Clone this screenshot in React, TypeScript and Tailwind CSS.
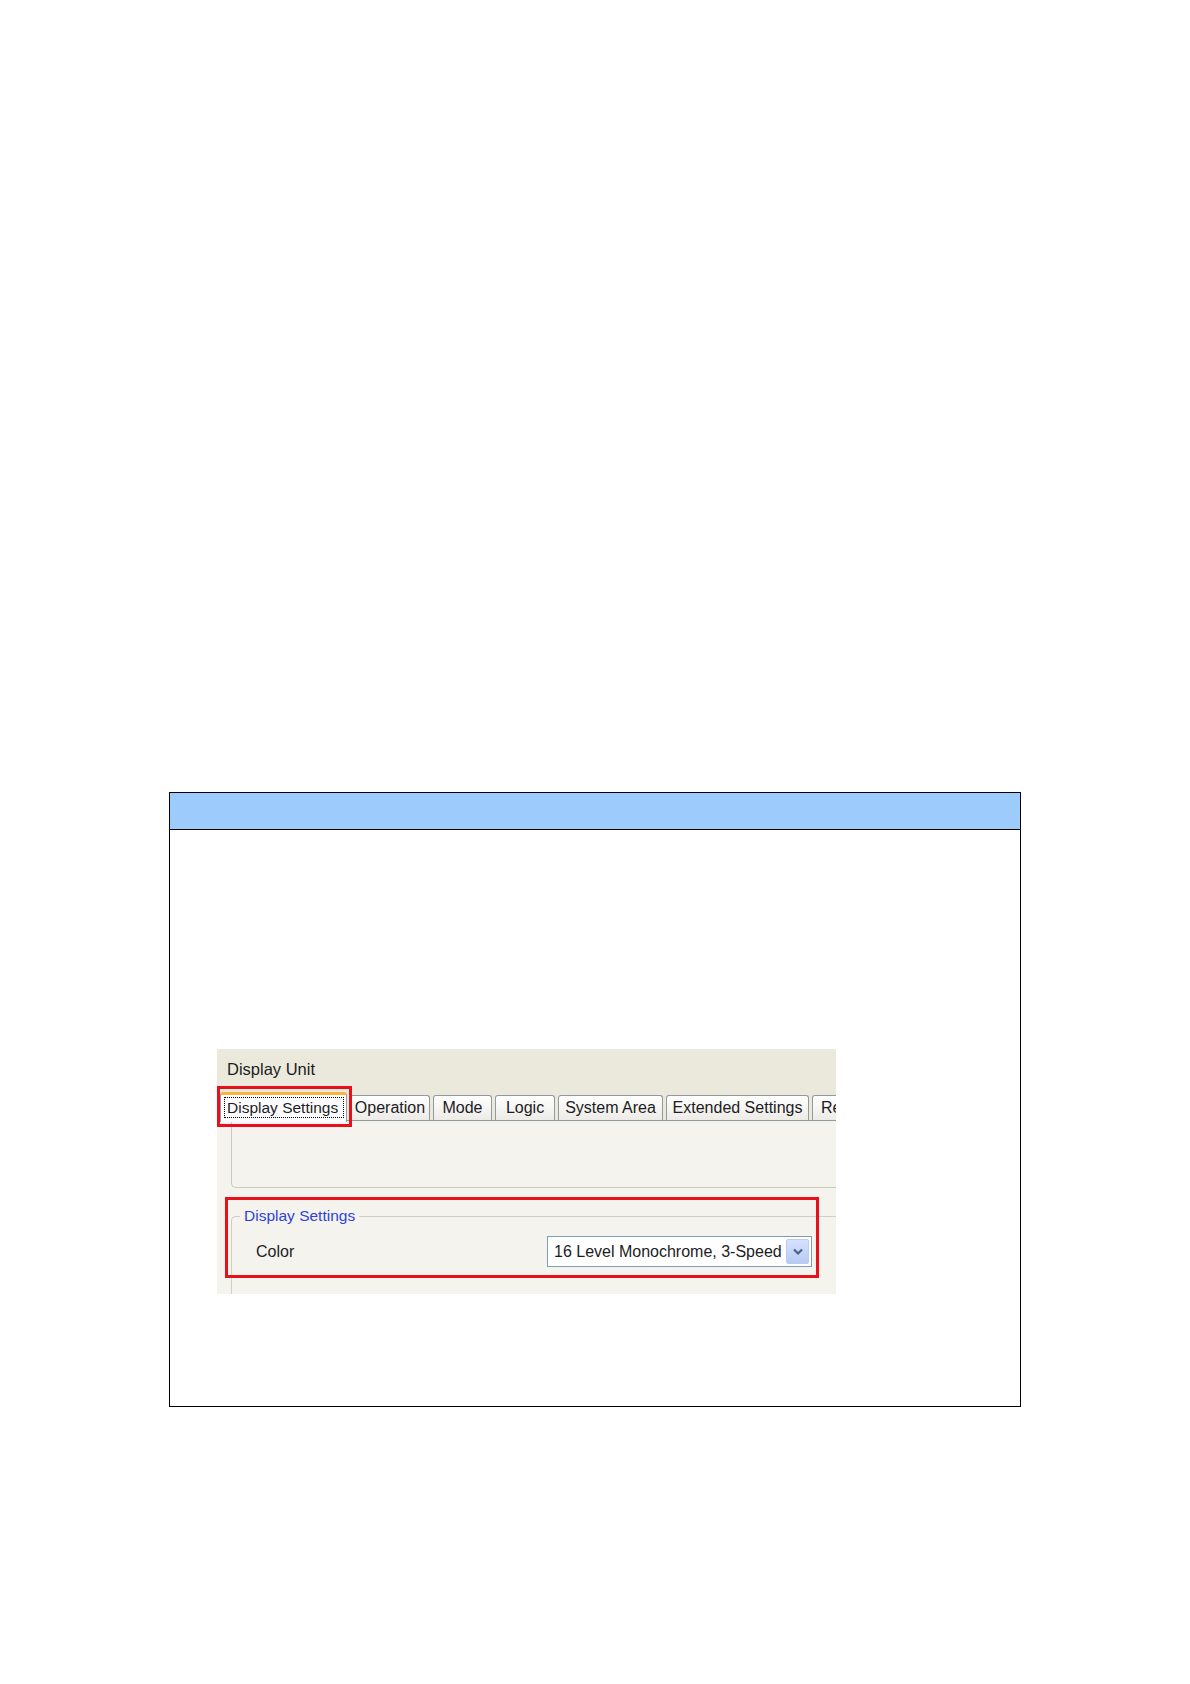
import React from "react";

function Tab({ label, w, left }: { label: string; w: string; left?: boolean }) {
  return (
    <div
      className={`${w} h-[25px] shrink-0 border border-b-0 border-[#919b9c] rounded-t-[3px] bg-gradient-to-b from-white to-[#ecebe6] ${left ? "text-left pl-[8px]" : "text-center"} pt-[3px] leading-[18px] whitespace-nowrap overflow-hidden`}
    >
      {label}
    </div>
  );
}

export default function App() {
  return (
    <div className="w-[1190px] h-[1684px] bg-white pt-[792px] pl-[169px]">
      <div className="w-[852px] h-[615px] border border-black flex flex-col">
        <div className="h-[37px] shrink-0 bg-[#9dcbfb] border-b border-black" />
        <div className="pl-[47px] pt-[219px]">
          <div className="relative w-[619px] h-[245px] overflow-hidden bg-[#ebe9dc] flex flex-col font-['Liberation_Sans',Arial,sans-serif] text-[16px] text-[#1c1c24]">
            <div className="h-[43px] shrink-0 pl-[10px] pt-[11px] leading-[18px] text-[16.5px]">Display Unit</div>
            <div className="h-[28px] shrink-0 flex items-end gap-[3px] pl-[3px] relative z-10">
              <div className="w-[127px] h-[30px] mb-[-2px] shrink-0 bg-[#fcfcfe] border-t-[3px] border-t-[#f6b641] border-x border-x-[#919b9c] rounded-t-[3px] pt-[2px] pl-[3px]">
                <div className="w-[120px] h-[21px] border border-dotted border-black leading-[18px] whitespace-nowrap pt-[1px] pl-[2px] text-[15.5px]">
                  Display Settings
                </div>
              </div>
              <Tab label="Operation" w="w-[80px]" />
              <Tab label="Mode" w="w-[59px]" />
              <Tab label="Logic" w="w-[60px]" />
              <Tab label="System Area" w="w-[105px]" />
              <Tab label="Extended Settings" w="w-[143px]" />
              <Tab label="Re" w="w-[70px]" left />
            </div>
            <div className="flex-1 bg-[#f4f3ee] border-t border-[#919b9c] pl-[14px] flex flex-col">
              <div className="h-[67px] shrink-0 border-l border-b border-[#cac9bd] rounded-bl-[5px]" />
              <fieldset className="mt-[19px] flex-1 border-t border-l border-[#d0cfc3] rounded-tl-[5px]">
                <legend className="ml-[8px] px-[4px] leading-[18px] text-[#2f43d6] whitespace-nowrap text-[15.5px]">
                  Display Settings
                </legend>
                <div className="flex items-center pt-[11px] pl-[24px]">
                  <div className="w-[291px] shrink-0 leading-[18px]">Color</div>
                  <div className="w-[265px] h-[31px] shrink-0 border border-[#7f9db9] bg-white flex items-center pl-[6px] pr-[2px]">
                    <span className="flex-1 leading-[18px] whitespace-nowrap">16 Level Monochrome, 3-Speed</span>
                    <div className="w-[23px] h-[25px] rounded-[2px] bg-gradient-to-b from-[#d6e2fc] to-[#b7cbf6] border border-[#bccbf0] flex items-center justify-center">
                      <svg width="12" height="10" viewBox="0 0 12 10">
                        <path d="M2 2.5 L6 6.5 L10 2.5" fill="none" stroke="#4d6185" strokeWidth="2.2" />
                      </svg>
                    </div>
                  </div>
                </div>
              </fieldset>
            </div>
            <div className="absolute left-0 top-[37px] w-[135px] h-[41px] border-[3px] border-[#e8101a] z-20" />
            <div className="absolute left-[8px] top-[148px] w-[594px] h-[81px] border-[3px] border-[#e8101a] z-20" />
          </div>
        </div>
      </div>
    </div>
  );
}
